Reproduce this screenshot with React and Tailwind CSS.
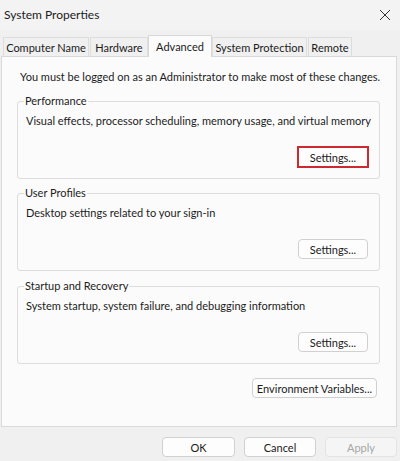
import React from "react";

function Btn({ children, className = "", disabled = false, highlight = false }) {
  return (
    <button
      className={
        "h-[20px] border flex items-center justify-center leading-none whitespace-nowrap " +
        (disabled
          ? "bg-[#f5f5f5] border-[#e3e3e3] text-[#a6a6a6] "
          : "bg-[#fdfdfd] border-[#d0d0d0] text-[#1b1b1b] ") +
        (highlight
          ? "rounded-none outline-2 outline-solid outline-[#cc2a30] -outline-offset-1 "
          : "rounded-[4px] ") +
        className
      }
    >
      {children}
    </button>
  );
}

function Group({ title, text, highlight, className = "" }) {
  return (
    <fieldset
      className={
        "ml-[15px] w-[363px] min-w-0 border border-[#dcdcdc] rounded-[3px] px-[8px] pb-[11px] " + className
      }
    >
      <legend className="px-[1px] -ml-[2px] leading-[16px] whitespace-nowrap">{title}</legend>
      <div className="mt-[4px] leading-[16px] whitespace-nowrap">{text}</div>
      <div className="mt-[18px] flex justify-end pr-[3px]">
        <Btn className="w-[70px]" highlight={highlight}>
          Settings...
        </Btn>
      </div>
    </fieldset>
  );
}

const tabs = [
  { t: "Computer Name", c: "w-[86px]" },
  { t: "Hardware", c: "ml-[1px] w-[58px]" },
  { t: "Advanced", c: "w-[64px]", sel: true },
  { t: "System Protection", c: "w-[95px]" },
  { t: "Remote", c: "ml-[1px] w-[44px]" },
];

export default function App() {
  return (
    <div className="w-[400px] h-[461px] overflow-hidden flex flex-col bg-[#f0f0f0] text-[11px] text-[#1b1b1b] font-['Lato',sans-serif]">
      {/* Title bar */}
      <div className="h-[30px] shrink-0 flex items-center justify-between pl-[4px] pr-[5px] bg-[#f3f3f3]">
        <span className="leading-none text-[12px]">System Properties</span>
        <svg width="12" height="12" viewBox="0 0 12 12" className="mr-[4px]">
          <path d="M1 1 L11 11 M11 1 L1 11" stroke="#333" strokeWidth="1" fill="none" />
        </svg>
      </div>

      {/* Tabs + panel */}
      <div className="flex-1 flex flex-col pt-[5px] pl-[1px] pr-[3px]">
        <div className="h-[21px] flex items-end pl-[2px]">
          {tabs.map(({ t, c, sel }) =>
            sel ? (
              <div
                key={t}
                className={
                  "relative z-10 h-[22px] -mb-[1px] flex items-center justify-center whitespace-nowrap border border-b-0 border-[#d9d9d9] bg-[#fbfbfb] leading-none " +
                  c
                }
              >
                {t}
              </div>
            ) : (
              <div
                key={t}
                className={
                  "h-[19px] flex items-center justify-center whitespace-nowrap border border-b-0 border-[#dddddd] bg-[#f0f0f0] leading-none " +
                  c
                }
              >
                {t}
              </div>
            )
          )}
        </div>
        <div className="flex-1 border border-[#d9d9d9] bg-[#fbfbfb] flex flex-col">
          <div className="pt-[12px] pl-[18px] leading-[16px] whitespace-nowrap">
            You must be logged on as an Administrator to make most of these changes.
          </div>
          <Group
            className="mt-[8px]"
            title="Performance"
            text="Visual effects, processor scheduling, memory usage, and virtual memory"
            highlight
          />
          <Group
            className="mt-[6px]"
            title="User Profiles"
            text="Desktop settings related to your sign-in"
          />
          <Group
            className="mt-[7px]"
            title="Startup and Recovery"
            text="System startup, system failure, and debugging information"
          />
          <div className="mt-[14px] flex justify-end pr-[19px]">
            <Btn className="w-[125px]">Environment Variables...</Btn>
          </div>
        </div>
      </div>

      {/* Bottom buttons */}
      <div className="h-[34px] shrink-0 flex justify-end items-start pt-[10px] pr-[3px] gap-[9px] bg-[#f0f0f0]">
        <Btn className="w-[73px]">OK</Btn>
        <Btn className="w-[72px]">Cancel</Btn>
        <Btn className="w-[72px]" disabled>
          Apply
        </Btn>
      </div>
    </div>
  );
}
